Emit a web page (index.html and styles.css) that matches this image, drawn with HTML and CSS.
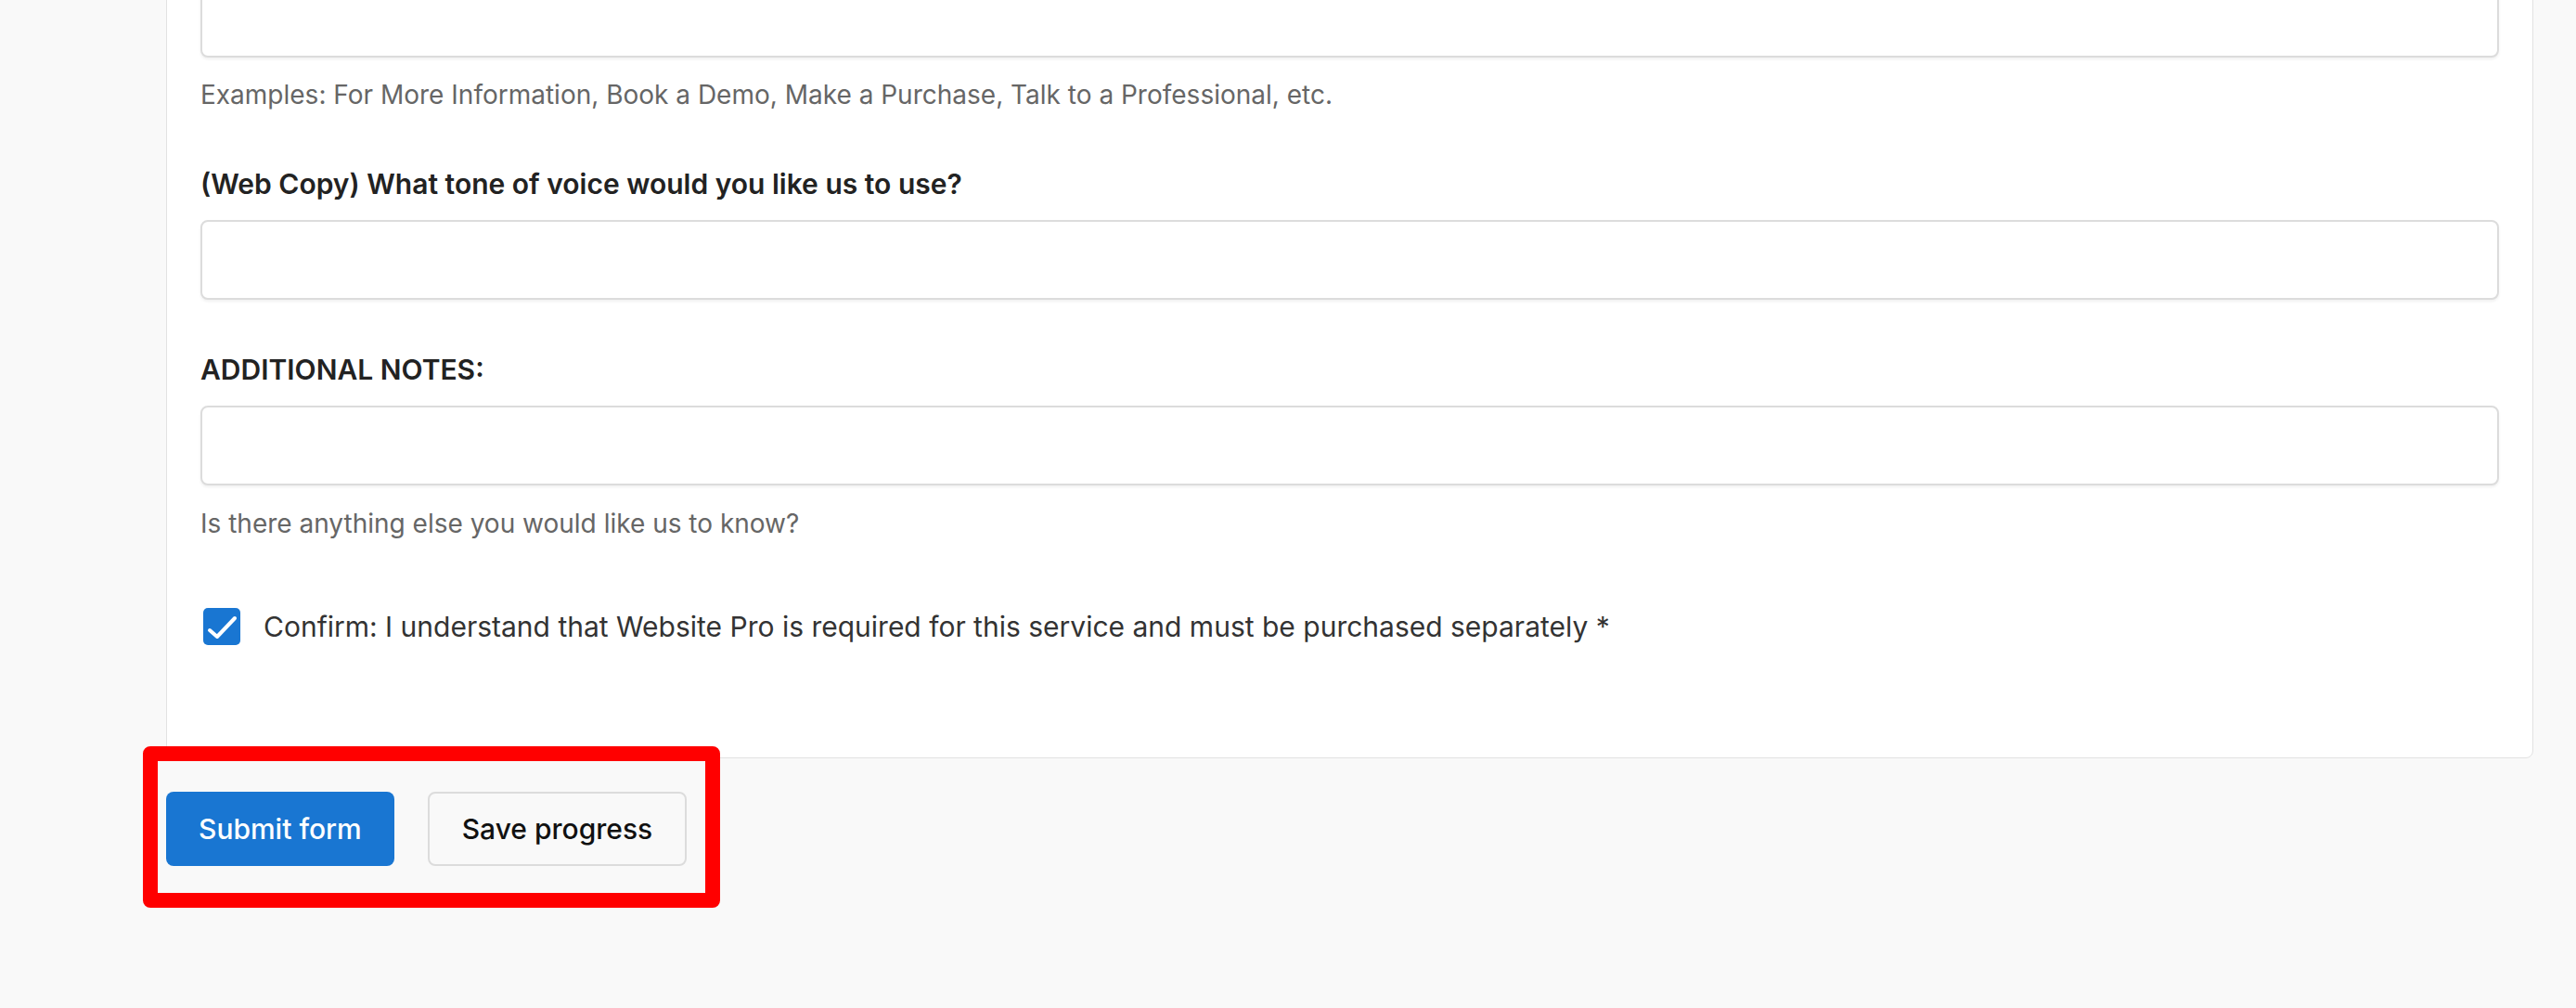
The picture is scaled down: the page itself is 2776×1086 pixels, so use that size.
FILE: index.html
```html
<!DOCTYPE html>
<html lang="en">
<head>
    <meta charset="UTF-8">
    <meta name="viewport" content="width=device-width, initial-scale=1.0">
    <title>Website Pro - Web Copy Form</title>
    <link rel="stylesheet" href="styles.css">
</head>
<body>
    <div class="page">
        <!-- Carte du formulaire -->
        <div class="card">
            <div class="field field-first">
                <input type="text" class="text-input">
                <p class="help">Examples: For More Information, Book a Demo, Make a Purchase, Talk to a Professional, etc.</p>
            </div>
            <div class="field">
                <label class="field-label">(Web Copy) What tone of voice would you like us to use?</label>
                <input type="text" class="text-input">
            </div>
            <div class="field field-last">
                <label class="field-label">ADDITIONAL NOTES:</label>
                <input type="text" class="text-input">
                <p class="help">Is there anything else you would like us to know?</p>
            </div>
            <label class="confirm">
                <span class="checkbox">
                    <svg viewBox="0 0 40 40" width="40" height="40"><polyline points="7,24 15,31 34,11" fill="none" stroke="#fff" stroke-width="4" stroke-linecap="round" stroke-linejoin="round"/></svg>
                </span>
                Confirm: I understand that Website Pro is required for this service and must be purchased separately *
            </label>
        </div>

        <!-- Boutons -->
        <div class="actions">
            <button class="btn btn-primary">Submit form</button>
            <button class="btn btn-secondary">Save progress</button>
            <span class="highlight"></span>
        </div>
    </div>
</body>
</html>
```

FILE: styles.css
```css
body {
    margin: 0;
    background: #f9f9f9;
    font-family: Inter, "Noto Sans", sans-serif;
    color: #222;
}
.page {
    padding: 0 46px 200px 179px;
}
.card {
    margin-top: -61px;
    padding: 36px 36px 121px;
    background: #fff;
    border: 1px solid #e2e2e2;
    border-radius: 8px;
}
.field {
    display: flex;
    flex-direction: column;
    margin-bottom: 57px;
}
.field-first {
    margin-bottom: 60px;
}
.field-last {
    margin-bottom: 73px;
}
.field-label {
    font-size: 30px;
    line-height: 36px;
    font-weight: 600;
    color: #222;
    margin-bottom: 21px;
}
.text-input {
    box-sizing: border-box;
    height: 86px;
    width: 100%;
    border: 2px solid #dcdcdc;
    border-radius: 8px;
    background: #fff;
    box-shadow: 0 2px 3px rgba(0, 0, 0, 0.06);
    font: inherit;
}
.help {
    margin: 22px 0 0;
    font-size: 28px;
    line-height: 36px;
    color: #666;
}
.field-last .help {
    margin-top: 23px;
}
.confirm {
    display: flex;
    align-items: center;
    gap: 25px;
    font-size: 30px;
    line-height: 40px;
    color: #333;
    padding-left: 3px;
}
.checkbox {
    display: block;
    flex: none;
    width: 40px;
    height: 40px;
    background: #1976d2;
    border-radius: 5px;
}
.checkbox svg {
    display: block;
}
.actions {
    position: relative;
    display: flex;
    gap: 36px;
    margin-top: 36px;
}
.btn {
    box-sizing: border-box;
    height: 80px;
    padding: 0 35px;
    font-family: Inter, "Noto Sans", sans-serif;
    font-size: 30px;
    font-weight: 500;
    border-radius: 8px;
    cursor: pointer;
}
.btn-primary {
    background: #1976d2;
    color: #fff;
    border: none;
}
.btn-secondary {
    background: #f9f9f9;
    color: #111;
    border: 2px solid #dcdcdc;
}
.highlight {
    position: absolute;
    left: -25px;
    top: -49px;
    width: 622px;
    height: 174px;
    box-sizing: border-box;
    border: 16px solid #ff0000;
    border-radius: 8px;
    pointer-events: none;
}
```
